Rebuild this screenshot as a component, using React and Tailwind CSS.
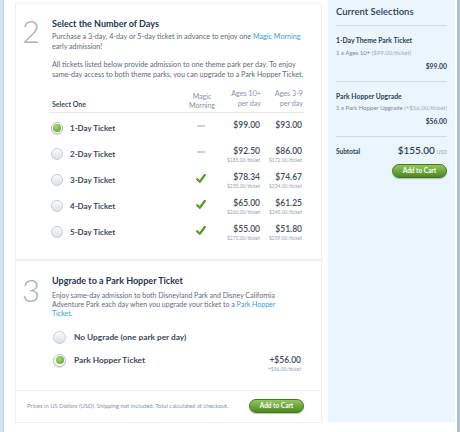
import React from 'react';

const font = { fontFamily: 'Lato, "Open Sans", Arial, sans-serif' };

function Radio({ on, size = 'w-[12px] h-[12px]' }) {
  if (on) {
    return (
      <span className={`${size} shrink-0 rounded-full border border-[#b8c1c9] bg-white flex items-center justify-center shadow-[0_1px_1px_rgba(0,0,0,0.15)]`}>
        <span className="w-[8px] h-[8px] rounded-full bg-[radial-gradient(circle_at_40%_35%,#a6d86f,#5a9c27)]" />
      </span>
    );
  }
  return (
    <span className={`${size} shrink-0 rounded-full border border-[#c6ccd2] bg-linear-to-b from-[#f7f8f9] to-[#dfe3e6] shadow-[inset_0_1px_1px_rgba(255,255,255,0.9)]`} />
  );
}

function Check() {
  return (
    <svg width="10" height="9" viewBox="0 0 10 9">
      <path d="M1.2 5.2 L3.8 7.8 L8.8 1" fill="none" stroke="#5a9e2b" strokeWidth="2.3" strokeLinecap="round" strokeLinejoin="round" />
    </svg>
  );
}

function AddToCart({ className = '' }) {
  return (
    <button className={`h-[14px] w-[55px] rounded-full border border-[#3f7a18] bg-linear-to-b from-[#93c85a] to-[#4b8a1d] text-white text-[6.5px] font-bold leading-none shadow-[0_1px_1px_rgba(0,0,0,0.25)] ${className}`}>
      Add to Cart
    </button>
  );
}

const days = [
  { label: '1-Day Ticket', magic: false, a: '$99.00', c: '$93.00', on: true },
  { label: '2-Day Ticket', magic: false, a: '$92.50', c: '$86.00', as: '$185.00/ticket', cs: '$172.00/ticket' },
  { label: '3-Day Ticket', magic: true, a: '$78.34', c: '$74.67', as: '$235.00/ticket', cs: '$224.00/ticket' },
  { label: '4-Day Ticket', magic: true, a: '$65.00', c: '$61.25', as: '$260.00/ticket', cs: '$245.00/ticket' },
  { label: '5-Day Ticket', magic: true, a: '$55.00', c: '$51.80', as: '$275.00/ticket', cs: '$259.00/ticket' },
];

function DayRow({ d }) {
  return (
    <div className="flex h-[26px]">
      <div className="w-[130px] flex items-center gap-[7px] -ml-[1px]">
        <Radio on={d.on} />
        <span className="text-[8px] font-bold text-[#3b4958]">{d.label}</span>
      </div>
      <div className="w-[40px] flex justify-center pt-[7px]">
        {d.magic ? <Check /> : <span className="mt-[3px] w-[8px] h-[2px] bg-[#cfd4d9]" />}
      </div>
      <div className="w-[39px] flex flex-col items-end pt-[5px]">
        <span className="text-[8.5px] leading-[10px] font-semibold text-[#3f4c59]">{d.a}</span>
        {d.as && <span className="text-[5px] leading-[8px] text-[#9aa4ae] whitespace-nowrap">{d.as}</span>}
      </div>
      <div className="w-[42px] flex flex-col items-end pt-[5px]">
        <span className="text-[8.5px] leading-[10px] font-semibold text-[#3f4c59]">{d.c}</span>
        {d.cs && <span className="text-[5px] leading-[8px] text-[#9aa4ae] whitespace-nowrap">{d.cs}</span>}
      </div>
    </div>
  );
}

function Numeral({ n }) {
  return (
    <div className="w-[36px] pl-[6px] text-[31px] leading-[30px] font-light text-[#a8b1ba]">{n}</div>
  );
}

function SelectionItem({ title, line, paren, price }) {
  return (
    <div className="border-b border-[#cfdae3] pb-[11px]">
      <div className="mt-[8px] text-[6.8px] leading-[12px] font-bold text-[#2d3f54]">{title}</div>
      <div className="mt-[2.5px] text-[6px] leading-[8px] text-[#7b8794] whitespace-nowrap">
        {line} <span className="text-[#a3adb7]">{paren}</span>
      </div>
      <div className="mt-[5px] text-right text-[6.8px] leading-[8px] font-bold text-[#2d3f54]">{price}</div>
    </div>
  );
}

export default function App() {
  return (
    <div className="w-[460px] h-[432px] flex bg-white overflow-hidden" style={font}>
      <div className="w-[4px] bg-[#d3e3f2] border-r border-[#c2d5e8]" />

      <div className="ml-[11px] mt-[3px] w-[307px] h-[420px] border border-[#eef0f3] flex flex-col">
        <section className="flex border-b-2 border-[#eceef1] pb-[14px]">
          <div className="pt-[12px]"><Numeral n="2" /></div>
          <div className="w-[252px] pt-[14px]">
            <h2 className="text-[9px] leading-[12px] font-bold text-[#1f3550]">Select the Number of Days</h2>
            <p className="mt-[2px] text-[7.2px] leading-[10px] text-[#5f6a76]">
              Purchase a 3-day, 4-day or 5-day ticket in advance to enjoy one <span className="text-[#3a9fdb]">Magic Morning</span> early admission!
            </p>
            <p className="mt-[8px] text-[7.2px] leading-[10px] text-[#5f6a76]">
              All tickets listed below provide admission to one theme park per day. To enjoy same-day access to both theme parks, you can upgrade to a Park Hopper Ticket.
            </p>

            <div className="mt-[9px] flex items-end border-b border-[#e7eaed] pb-[3px] -ml-[3px] pl-[3px]">
              <div className="w-[130px] text-[7px] leading-[10px] font-bold text-[#3e4c5b]">Select One</div>
              <div className="w-[40px] text-center text-[7px] leading-[8.5px] text-[#8792a0]">Magic<br />Morning</div>
              <div className="w-[39px] text-right text-[7.2px] leading-[10px] text-[#8a96a2] whitespace-nowrap">Ages 10+<br />per day</div>
              <div className="w-[42px] text-right text-[7.2px] leading-[10px] text-[#8a96a2] whitespace-nowrap">Ages 3-9<br />per day</div>
            </div>

            <div className="pt-[2px]">
              {days.map((d) => <DayRow key={d.label} d={d} />)}
            </div>
          </div>
        </section>

        <section className="flex border-b border-[#eceef1] pb-[18px]">
          <div className="pt-[14px]"><Numeral n="3" /></div>
          <div className="w-[252px] pt-[14px]">
            <h2 className="text-[9px] leading-[12px] font-bold text-[#1f3550]">Upgrade to a Park Hopper Ticket</h2>
            <p className="mt-[3.5px] w-[240px] text-[7px] leading-[9px] text-[#5f6a76]">
              Enjoy same-day admission to both Disneyland Park and Disney California Adventure Park each day when you upgrade your ticket to a <span className="text-[#3a9fdb]">Park Hopper Ticket.</span>
            </p>
            <div className="mt-[8px] flex h-[23px] items-center gap-[8px] pl-[1px]">
              <Radio size="w-[13px] h-[13px]" />
              <span className="text-[8.3px] font-bold text-[#3b4958]">No Upgrade (one park per day)</span>
            </div>
            <div className="flex h-[23px]">
              <div className="flex items-center gap-[8px] pl-[1px]">
                <Radio on size="w-[13px] h-[13px]" />
                <span className="text-[8.3px] font-bold text-[#3b4958]">Park Hopper Ticket</span>
              </div>
              <div className="ml-auto w-[60px] pr-[3px] flex flex-col items-end pt-[6.5px]">
                <span className="text-[8.5px] leading-[10px] font-semibold text-[#3f4c59]">+$56.00</span>
                <span className="text-[5px] leading-[8px] text-[#9aa4ae]">+$56.00/ticket</span>
              </div>
            </div>
          </div>
        </section>

        <div className="flex h-[32px] items-center pl-[11px] pr-[17px]">
          <span className="text-[5.9px] text-[#8a949e]">Prices in US Dollars (USD). Shipping not included. Total calculated at checkout.</span>
          <AddToCart className="ml-auto" />
        </div>
      </div>

      <aside className="ml-[6px] w-[127px] h-[422px] bg-[#eaf5fd] px-[8px]">
        <div className="pt-[6px] pb-[7px] border-b border-[#cfdae3]">
          <h3 className="text-[9.5px] leading-[12px] font-semibold text-[#2c3f56]">Current Selections</h3>
        </div>
        <SelectionItem title="1-Day Theme Park Ticket" line="1 x Ages 10+" paren="($99.00/ticket)" price="$99.00" />
        <SelectionItem title="Park Hopper Upgrade" line="1 x Park Hopper Upgrade" paren="(+$56.00/ticket)" price="$56.00" />
        <div className="mt-[6px] flex items-baseline">
          <span className="text-[6.5px] font-bold text-[#2d3f54]">Subtotal</span>
          <span className="ml-auto text-[10px] font-semibold text-[#2d3f54]">$155.00</span>
          <span className="ml-[2px] text-[5px] text-[#98a3ae]">USD</span>
        </div>
        <div className="mt-[6px] flex justify-end">
          <AddToCart />
        </div>
      </aside>

      <div className="w-[2px]" />
      <div className="w-[3px] bg-[#abbfd3]" />
    </div>
  );
}
